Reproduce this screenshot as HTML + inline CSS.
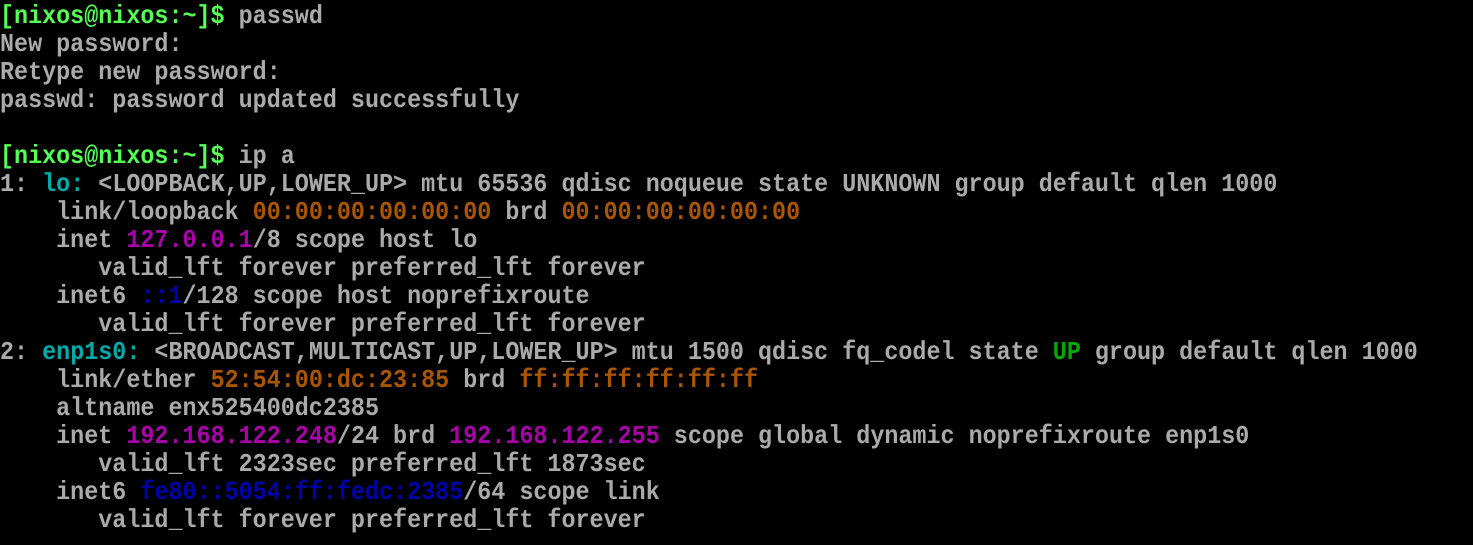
<!DOCTYPE html>
<html><head><meta charset="utf-8"><style>
html,body{margin:0;padding:0;background:#000;width:1473px;height:545px;overflow:hidden}
pre{margin:0;padding:0;font-family:"Liberation Mono",monospace;font-size:23.4px;font-weight:bold;line-height:25px;color:#aaaaaa;white-space:pre;transform:scaleY(1.12);transform-origin:0 0;position:relative;top:4px}
.g{color:#55ff55}.c{color:#00aaaa}.o{color:#aa5500}.m{color:#aa00aa}.b{color:#0000aa}.u{color:#00aa00}
</style></head><body><pre><span class="g">[nixos@nixos:~]$</span> passwd
New password:
Retype new password:
passwd: password updated successfully

<span class="g">[nixos@nixos:~]$</span> ip a
1: <span class="c">lo:</span> &lt;LOOPBACK,UP,LOWER_UP&gt; mtu 65536 qdisc noqueue state UNKNOWN group default qlen 1000
    link/loopback <span class="o">00:00:00:00:00:00</span> brd <span class="o">00:00:00:00:00:00</span>
    inet <span class="m">127.0.0.1</span>/8 scope host lo
       valid_lft forever preferred_lft forever
    inet6 <span class="b">::1</span>/128 scope host noprefixroute
       valid_lft forever preferred_lft forever
2: <span class="c">enp1s0:</span> &lt;BROADCAST,MULTICAST,UP,LOWER_UP&gt; mtu 1500 qdisc fq_codel state <span class="u">UP</span> group default qlen 1000
    link/ether <span class="o">52:54:00:dc:23:85</span> brd <span class="o">ff:ff:ff:ff:ff:ff</span>
    altname enx525400dc2385
    inet <span class="m">192.168.122.248</span>/24 brd <span class="m">192.168.122.255</span> scope global dynamic noprefixroute enp1s0
       valid_lft 2323sec preferred_lft 1873sec
    inet6 <span class="b">fe80::5054:ff:fedc:2385</span>/64 scope link
       valid_lft forever preferred_lft forever
</pre></body></html>
